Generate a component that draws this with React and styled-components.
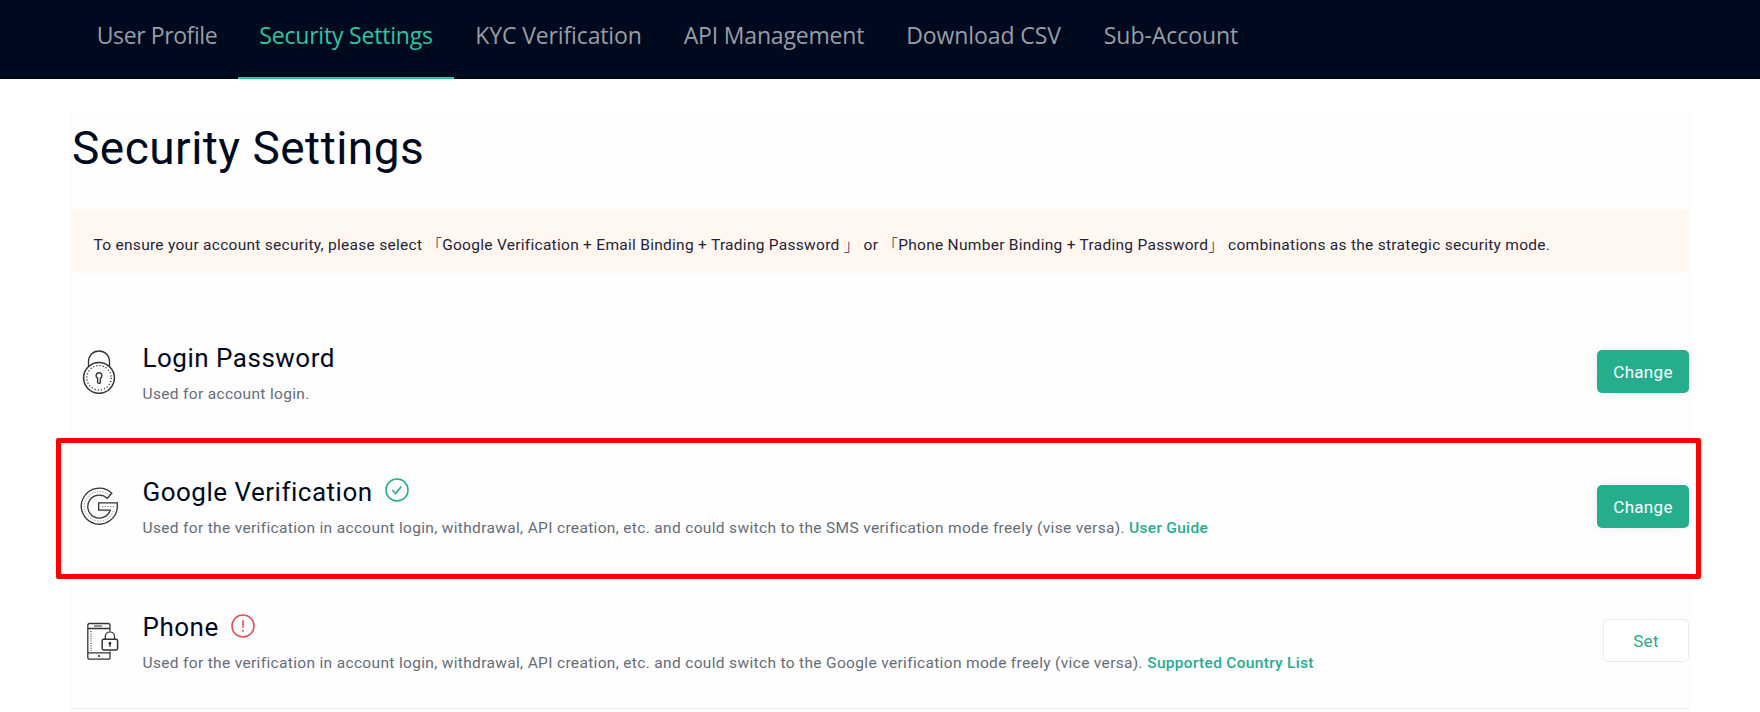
import React from "react";
import styled, { createGlobalStyle, css } from "styled-components";

const GlobalStyle = createGlobalStyle`
  * { box-sizing: border-box; }
  body {
    margin: 0;
    background: #fff;
    color: #000a1e;
    font-family: Roboto, "Noto Sans CJK SC", sans-serif;
  }
`;

const Page = styled.div`
  height: 712px;
  overflow: hidden;
`;

const NavBar = styled.nav`
  display: flex;
  height: 79px;
  padding-left: 76px;
  background: #000a1e;
`;

const Tab = styled.a`
  display: flex;
  justify-content: center;
  width: ${(p) => p.$width}px;
  padding-top: 19px;
  border-bottom: 2px solid ${(p) => (p.$active ? "#2dc5a2" : "transparent")};
  color: ${(p) => (p.$active ? "#2dc5a2" : "#999da5")};
  font-family: "Open Sans", "Noto Sans", sans-serif;
  font-size: 23px;
  line-height: 32px;
  letter-spacing: ${(p) => p.$spacing}px;
  white-space: nowrap;
`;

const Card = styled.main`
  width: 1619px;
  height: 700px;
  margin: 33px 0 0 71px;
  padding-top: 5px;
  border: 1px solid #fbfbfb;
  background: #fefefe;
`;

const Title = styled.h1`
  margin: 0 0 31px;
  font-size: 46px;
  font-weight: 400;
  line-height: 60px;
  letter-spacing: 0.48px;
`;

const Notice = styled.p`
  height: 64px;
  margin: 0 0 31px;
  padding: 24px 22px 0 21.5px;
  border-radius: 5px;
  background: #fff7f0;
  color: #1f2438;
  font-size: 15.5px;
  line-height: 24px;
  letter-spacing: 0.28px;
  white-space: nowrap;
`;

const Bracket = styled.span`
  position: relative;
  top: 1px;
  font-weight: 300;
`;

const Row = styled.section`
  position: relative;
  display: flex;
  align-items: center;
  height: ${(p) => p.$height}px;
  border-bottom: 1px solid #ebebeb;
`;

const IconCell = styled.div`
  display: flex;
  width: 70.5px;
`;

const RowText = styled.div`
  flex: 1;
  padding-top: ${(p) => p.$padTop}px;
`;

const RowTitle = styled.h2`
  display: flex;
  align-items: center;
  gap: 12px;
  margin: 0 0 6px;
  font-size: 26px;
  font-weight: 400;
  line-height: 36px;
  letter-spacing: 0.5px;
`;

const Description = styled.p`
  margin: 0;
  padding-bottom: 3px;
  color: #666c78;
  font-size: 15.5px;
  line-height: 24px;
  letter-spacing: 0.335px;
  white-space: nowrap;
`;

const Link = styled.a`
  color: #25ad8e;
  font-weight: 500;
  letter-spacing: 0.3px;
`;

const Button = styled.button`
  height: 43px;
  padding: 0;
  border-radius: 5px;
  font-family: inherit;
  font-size: 17px;
  letter-spacing: 0.3px;
  ${(p) =>
    p.$primary
      ? css`
          width: 92px;
          border: 0;
          background: #25ad8e;
          color: #fff;
          box-shadow: 0 0 12px rgba(0, 0, 0, 0.07);
        `
      : css`
          width: 86px;
          margin-bottom: 2px;
          padding-top: 2px;
          border: 1px solid #ebebeb;
          background: #fff;
          color: #25ad8e;
        `}
`;

const Highlight = styled.div`
  position: absolute;
  top: -2px;
  right: -12px;
  bottom: -6px;
  left: -16px;
  border: 5px solid #ff0000;
  border-radius: 2px;
  pointer-events: none;
`;

const StatusSvg = styled.svg`
  margin-top: -3px;
`;

const RowIcon = ({ children }) => (
  <svg width="54" height="54" viewBox="0 0 54 54" fill="none" stroke="#333" strokeWidth="1.3">
    {children}
  </svg>
);

const LockIcon = () => (
  <RowIcon>
    <path d="M16.5 21.5V16.5a10.5 10.5 0 0 1 21 0V21.5" />
    <circle cx="27" cy="32.8" r="15.4" strokeWidth="1.5" />
    <circle cx="27" cy="32.8" r="12.2" strokeDasharray="1.2 2" />
    <path d="M25.6 33.2a2.9 2.9 0 1 1 2.8 0V37a1.4 1.4 0 0 1-2.8 0Z" strokeWidth="1.4" />
  </RowIcon>
);

const GoogleIcon = () => (
  <RowIcon>
    <path d="M39.8 13.2A18 18 0 1 0 45.3 26.5V22.8H26.7V30.2H38.2A11.5 11.5 0 1 1 35.2 18.2Z" />
    <path d="M36.2 14.6A14.8 14.8 0 1 0 41.4 30.5" strokeWidth="1" strokeDasharray="1 1.7" stroke="#777" />
    <path d="M30 26.5H42.5" strokeWidth="1" strokeDasharray="1.2 1.5" stroke="#777" />
  </RowIcon>
);

const PhoneIcon = () => (
  <RowIcon>
    <path d="M38 17V11.5a2 2 0 0 0-2-2H17.8a2 2 0 0 0-2 2V43.2a2 2 0 0 0 2 2H36a2 2 0 0 0 2-2V37.5" />
    <path d="M16 14.5H38M16 38.8H38" />
    <path d="M22 12H30" strokeWidth="1.6" stroke="#777" />
    <path d="M19 17V37" strokeWidth="1.6" strokeDasharray="1 1.4" stroke="#777" />
    <circle cx="27" cy="42" r="1.1" fill="#333" stroke="none" />
    <rect x="30.2" y="25.3" width="15.4" height="10.6" rx="1.6" strokeWidth="1.5" />
    <path d="M33.3 25V22.5a4.6 4.6 0 0 1 9.2 0V25" />
    <circle cx="37.9" cy="29.4" r="1.4" fill="#222" stroke="none" />
    <path d="M37.9 29.5V33" />
  </RowIcon>
);

const VerifiedIcon = () => (
  <StatusSvg width="24" height="24" viewBox="0 0 24 24" fill="none" stroke="#25ad8e" strokeWidth="1.6">
    <circle cx="12" cy="12" r="11" />
    <path d="M7.3 12l3.4 3.6 5.6-7" />
  </StatusSvg>
);

const AlertIcon = () => (
  <StatusSvg width="24" height="24" viewBox="0 0 24 24" fill="none" stroke="#e05252" strokeWidth="1.6">
    <circle cx="12" cy="12" r="11" />
    <path d="M12 6.3V13.8M12 15.8V17.8" />
  </StatusSvg>
);

const tabs = [
  { label: "User Profile", width: 162, spacing: -0.4 },
  { label: "Security Settings", width: 216, spacing: -0.2, active: true },
  { label: "KYC Verification", width: 209, spacing: -0.13 },
  { label: "API Management", width: 222, spacing: -0.18 },
  { label: "Download CSV", width: 197, spacing: -0.1 },
  { label: "Sub-Account", width: 178, spacing: -0.05 },
];

const rows = [
  {
    title: "Login Password",
    icon: <LockIcon />,
    text: "Used for account login.",
    action: "Change",
    primary: true,
    height: 136,
    padTop: 5,
  },
  {
    title: "Google Verification",
    icon: <GoogleIcon />,
    status: <VerifiedIcon />,
    text: "Used for the verification in account login, withdrawal, API creation, etc. and could switch to the SMS verification mode freely (vise versa).",
    link: "User Guide",
    action: "Change",
    primary: true,
    highlighted: true,
    height: 134,
    padTop: 3,
  },
  {
    title: "Phone",
    icon: <PhoneIcon />,
    status: <AlertIcon />,
    text: "Used for the verification in account login, withdrawal, API creation, etc. and could switch to the Google verification mode freely (vice versa).",
    link: "Supported Country List",
    action: "Set",
    height: 135,
    padTop: 5,
  },
];

export default function App() {
  return (
    <Page>
      <GlobalStyle />
      <NavBar>
        {tabs.map((t) => (
          <Tab key={t.label} $width={t.width} $spacing={t.spacing} $active={t.active}>
            {t.label}
          </Tab>
        ))}
      </NavBar>
      <Card>
        <Title>Security Settings</Title>
        <Notice>
          To ensure your account security, please select <Bracket>「</Bracket>Google Verification + Email Binding +
          Trading Password <Bracket>」</Bracket> or <Bracket>「</Bracket>Phone Number Binding + Trading Password
          <Bracket>」</Bracket> combinations as the strategic security mode.
        </Notice>
        {rows.map((r) => (
          <Row key={r.title} $height={r.height}>
            <IconCell>{r.icon}</IconCell>
            <RowText $padTop={r.padTop}>
              <RowTitle>
                {r.title}
                {r.status}
              </RowTitle>
              <Description>
                {r.text} {r.link && <Link>{r.link}</Link>}
              </Description>
            </RowText>
            <Button $primary={r.primary}>{r.action}</Button>
            {r.highlighted && <Highlight />}
          </Row>
        ))}
      </Card>
    </Page>
  );
}
